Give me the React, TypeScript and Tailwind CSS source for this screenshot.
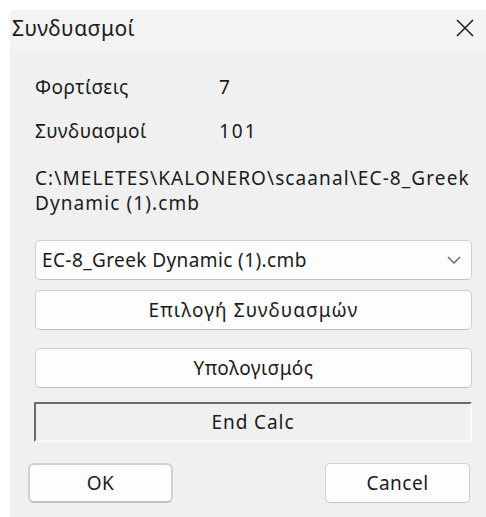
import React from 'react';

const font = { fontFamily: '"Noto Sans", "Liberation Sans", sans-serif' };

const Button: React.FC<{ className?: string; children: React.ReactNode }> = ({ className = '', children }) => (
  <button
    className={`flex items-center justify-center bg-[#fdfdfd] border border-[#d0d0d0] border-b-[#c0c0c0] rounded-[5px] text-[19px] tracking-[0.5px] text-[#1b1b1b] ${className}`}
  >
    {children}
  </button>
);

export default function App() {
  return (
    <div className="w-[486px] h-[517px] bg-white pt-[10px] pl-[10px]" style={font}>
      <div className="w-[476px] h-[507px] bg-[#f0f0f0] flex flex-col">
        {/* title bar */}
        <div className="h-[40px] bg-[#f3f3f3] flex items-center justify-between pl-[2px] pr-[11px]">
          <span className="text-[21px] tracking-[0.5px] text-[#1b1b1b] leading-none -mt-[4px]">Συνδυασμοί</span>
          <svg width="20" height="20" viewBox="0 0 20 20" className="-mt-[4px]">
            <path d="M2 2 L18 18 M18 2 L2 18" stroke="#222" strokeWidth="1.6" fill="none" />
          </svg>
        </div>

        <div className="flex flex-col pl-[25px] pr-[14px] text-[19px] tracking-[0.5px] text-[#1b1b1b]">
          <div className="flex items-center h-[22px] mt-[26px]">
            <span className="w-[184px]">Φορτίσεις</span>
            <span className="tracking-[2px]">7</span>
          </div>
          <div className="flex items-center h-[22px] mt-[22px]">
            <span className="w-[184px]">Συνδυασμοί</span>
            <span className="tracking-[2px]">101</span>
          </div>
          <div className="mt-[24px] leading-[25px] tracking-[1.1px]">
            C:\MELETES\KALONERO\scaanal\EC-8_Greek
            <br />
            Dynamic (1).cmb
          </div>

          {/* file combo */}
          <div className="mt-[24px] w-[437px] h-[40px] bg-[#fdfdfd] border border-[#d0d0d0] border-b-[#c4c4c4] rounded-[5px] flex items-center justify-between pl-[6px] pr-[10px]">
            <span className="tracking-[0.4px]">EC-8_Greek Dynamic (1).cmb</span>
            <svg width="14" height="8" viewBox="0 0 14 8">
              <path d="M1 1 L7 7 L13 1" stroke="#606060" strokeWidth="1.3" fill="none" />
            </svg>
          </div>

          <Button className="mt-[10px] w-[437px] h-[40px] tracking-[1.1px]">Επιλογή Συνδυασμών</Button>
          <Button className="mt-[18px] w-[437px] h-[40px]">Υπολογισμός</Button>

          {/* status field, sunken */}
          <div className="mt-[14px] -ml-[1px] w-[438px] h-[40px] border-2 border-t-[#6a6a6a] border-l-[#6a6a6a] border-b-[#fafafa] border-r-[#fafafa] flex items-center justify-center tracking-[0.9px]">
            End Calc
          </div>
        </div>

        <div className="flex justify-between pl-[18px] pr-[16px] mt-[21px]">
          <Button className="w-[145px] h-[40px] border-2 border-[#1f75cf] border-b-[#1f75cf] rounded-[6px]">OK</Button>
          <Button className="w-[145px] h-[40px]">Cancel</Button>
        </div>
      </div>
    </div>
  );
}
